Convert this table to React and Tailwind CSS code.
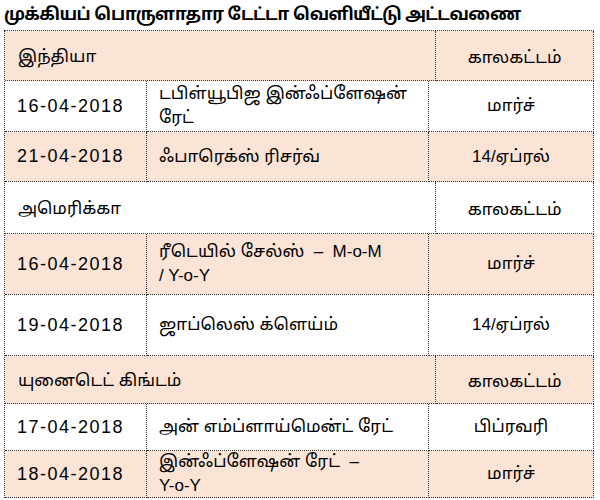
const PEACH = "bg-[#fbe4d5]";

const sections = [
  {
    name: "இந்தியா",
    bg: PEACH,
    h: "h-[50px]",
    rows: [
      { date: "16-04-2018", desc: ["டபிள்யூபிஜ இன்ஃப்ளேஷன்", "ரேட்"], when: "மார்ச்", bg: "bg-white", h: "h-[51px]" },
      { date: "21-04-2018", desc: ["ஃபாரெக்ஸ் ரிசர்வ்"], when: "14/ஏப்ரல்", bg: PEACH, h: "h-[50px]" },
    ],
  },
  {
    name: "அமெரிக்கா",
    bg: "bg-white",
    h: "h-[52px]",
    rows: [
      { date: "16-04-2018", desc: ["ரீடெயில் சேல்ஸ்  –  M-o-M", "/ Y-o-Y"], when: "மார்ச்", bg: PEACH, h: "h-[61px]" },
      { date: "19-04-2018", desc: ["ஜாப்லெஸ் க்ளெய்ம்"], when: "14/ஏப்ரல்", bg: "bg-white", h: "h-[61px]" },
    ],
  },
  {
    name: "யுனைடெட் கிங்டம்",
    bg: PEACH,
    h: "h-[48px]",
    rows: [
      { date: "17-04-2018", desc: ["அன் எம்ப்ளாய்மென்ட் ரேட்"], when: "பிப்ரவரி", bg: "bg-white", h: "h-[47px]" },
      { date: "18-04-2018", desc: ["இன்ஃப்ளேஷன் ரேட்  –", "Y-o-Y"], when: "மார்ச்", bg: PEACH, h: "h-[47px]" },
    ],
  },
];

const cell = "border-r border-b border-dotted border-[#333]";

function SectionRow({ s }) {
  return (
    <div className={`flex ${s.h} ${s.bg}`}>
      <div className={`${cell} w-[432px] flex items-center pl-[13px] pt-[2px]`}>{s.name}</div>
      <div className={`${cell} w-[158px] flex items-center justify-center pt-[4px]`}>காலகட்டம்</div>
    </div>
  );
}

function DataRow({ r }) {
  return (
    <div className={`flex ${r.h} ${r.bg}`}>
      <div className={`${cell} w-[142px] flex items-center pl-[12px] text-[18px] tracking-[1.5px]`}>{r.date}</div>
      <div className={`${cell} w-[282px] flex flex-col justify-center pl-[12px] leading-[24px] whitespace-pre`}>
        {r.desc.map((line, i) => (
          <span key={i}>{line}</span>
        ))}
      </div>
      <div className={`${cell} w-[165px] flex items-center justify-center`}>{r.when}</div>
    </div>
  );
}

export default function App() {
  return (
    <div className="w-[600px] h-[500px] bg-white text-black text-[17px] font-['Liberation_Sans','Noto_Sans_Tamil','Lohit_Tamil',sans-serif] overflow-hidden">
      <h1 className="h-[30px] pl-[4px] text-[17px] tracking-[-0.6px] font-bold leading-[30px] whitespace-nowrap">
        முக்கியப் பொருளாதார டேட்டா வெளியீட்டு அட்டவணை
      </h1>
      <div className="ml-[4px] w-[590px] border-l border-t border-dotted border-[#333]">
        {sections.map((s) => (
          <div key={s.name}>
            <SectionRow s={s} />
            {s.rows.map((r) => (
              <DataRow key={r.date + r.when} r={r} />
            ))}
          </div>
        ))}
      </div>
    </div>
  );
}
